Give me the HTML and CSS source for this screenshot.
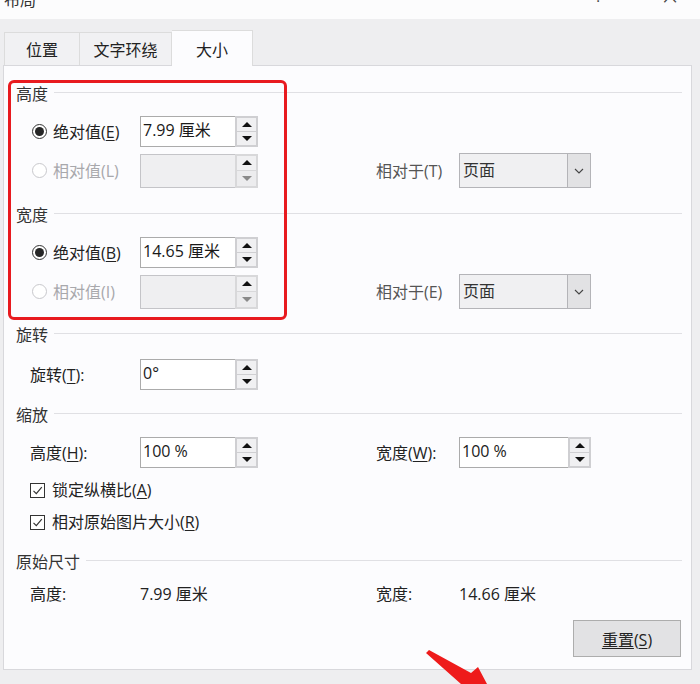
FILE: index.html
```html
<!DOCTYPE html>
<html lang="zh-CN">
<head>
<meta charset="utf-8">
<title>布局</title>
<link rel="stylesheet" href="styles.css">
</head>
<body>
<div class="titlebar">
  <span class="title">布局</span>
  <span class="tb-btns"><span class="help">?</span><span class="close">×</span></span>
</div>
<div class="tabs">
  <div class="tab t1">位置</div>
  <div class="tab t2">文字环绕</div>
  <div class="tab active">大小</div>
</div>
<div class="panel">
  <div class="redbox"></div>

  <div class="group-h"><span>高度</span></div>
  <div class="row">
    <label class="radio"><span class="rb on"></span>绝对值(<u>E</u>)</label>
    <div class="spin"><div class="field">7.99 厘米</div><div class="btns"><span class="b"><i class="up"></i></span><span class="b"><i class="dn"></i></span></div></div>
  </div>
  <div class="row">
    <label class="radio dis"><span class="rb"></span>相对值(L)</label>
    <div class="spin off"><div class="field"></div><div class="btns"><span class="b"><i class="up"></i></span><span class="b"><i class="dn"></i></span></div></div>
    <span></span>
    <span class="lbl2">相对于(T)</span>
    <div class="select"><span class="sv">页面</span><span class="arr"><svg width="10" height="6" viewBox="0 0 10 6"><path d="M1 1 L5 5 L9 1" fill="none" stroke="#444" stroke-width="1.1"/></svg></span></div>
  </div>

  <div class="group-h h2"><span>宽度</span></div>
  <div class="row">
    <label class="radio"><span class="rb on"></span>绝对值(<u>B</u>)</label>
    <div class="spin"><div class="field">14.65 厘米</div><div class="btns"><span class="b"><i class="up"></i></span><span class="b"><i class="dn"></i></span></div></div>
  </div>
  <div class="row">
    <label class="radio dis"><span class="rb"></span>相对值(I)</label>
    <div class="spin off"><div class="field"></div><div class="btns"><span class="b"><i class="up"></i></span><span class="b"><i class="dn"></i></span></div></div>
    <span></span>
    <span class="lbl2">相对于(E)</span>
    <div class="select"><span class="sv">页面</span><span class="arr"><svg width="10" height="6" viewBox="0 0 10 6"><path d="M1 1 L5 5 L9 1" fill="none" stroke="#444" stroke-width="1.1"/></svg></span></div>
  </div>

  <div class="group-h h3"><span>旋转</span></div>
  <div class="row r-rot">
    <span class="lbl">旋转(<u>T</u>):</span>
    <div class="spin"><div class="field">0°</div><div class="btns"><span class="b"><i class="up"></i></span><span class="b"><i class="dn"></i></span></div></div>
  </div>

  <div class="group-h h4"><span>缩放</span></div>
  <div class="row">
    <span class="lbl">高度(<u>H</u>):</span>
    <div class="spin"><div class="field">100 %</div><div class="btns"><span class="b"><i class="up"></i></span><span class="b"><i class="dn"></i></span></div></div>
    <span></span>
    <span class="lbl">宽度(<u>W</u>):</span>
    <div class="spin"><div class="field">100 %</div><div class="btns"><span class="b"><i class="up"></i></span><span class="b"><i class="dn"></i></span></div></div>
  </div>
  <div class="chk c1"><span class="box"><svg width="13" height="13" viewBox="0 0 13 13"><path d="M2.5 6.8 L5.3 9.6 L10.8 3.2" fill="none" stroke="#333" stroke-width="1.2"/></svg></span>锁定纵横比(<u>A</u>)</div>
  <div class="chk"><span class="box"><svg width="13" height="13" viewBox="0 0 13 13"><path d="M2.5 6.8 L5.3 9.6 L10.8 3.2" fill="none" stroke="#333" stroke-width="1.2"/></svg></span>相对原始图片大小(<u>R</u>)</div>

  <div class="group-h h5"><span>原始尺寸</span></div>
  <div class="row r-orig">
    <span class="lbl">高度:</span>
    <span class="val">7.99 厘米</span>
    <span></span>
    <span class="lbl">宽度:</span>
    <span class="val">14.66 厘米</span>
  </div>

  <div class="actions"><button class="btn"><span>重置</span>(<u>S</u>)</button></div>
</div>
<svg class="arrow" width="700" height="684" viewBox="0 0 700 684"><polygon points="426,653 429,650 471,673 478,667 487,684 461,684" fill="#ee1b1b"/></svg>
</body>
</html>
```
FILE: styles.css
```css
* { box-sizing: border-box; }
html, body { margin: 0; padding: 0; }
body {
  width: 700px;
  height: 684px;
  overflow: hidden;
  background: #eeeef0;
  font-family: "Open Sans", "Noto Sans CJK SC", sans-serif;
  font-size: 16px;
  color: #222;
  position: relative;
}
u { text-decoration: underline; text-underline-offset: 2px; text-decoration-thickness: 1px; }

.titlebar {
  height: 19px;
  background: #fcfcfd;
  overflow: hidden;
  display: flex;
  justify-content: space-between;
  padding-left: 4px;
}
.title { display: block; line-height: 16px; margin-top: -9px; color: #333; font-family: "Noto Sans CJK SC", sans-serif; }
.tb-btns { display: flex; }
.help { display: block; font-size: 15px; line-height: 16px; margin-top: -12px; margin-right: 58px; color: #444; }
.close { display: block; font-size: 24px; line-height: 20px; margin-top: -14px; margin-right: 20px; color: #444; font-family: "DejaVu Sans", sans-serif; font-weight: 300; }

.tabs {
  margin-top: 11px;
  height: 35px;
  padding-left: 4px;
  display: flex;
  align-items: flex-end;
}
.tab {
  height: 33px;
  display: flex;
  align-items: center;
  justify-content: center;
  background: #f1f1f3;
  border: 1px solid #dcdcdc;
  border-bottom: none;
  color: #222;
  font-family: "Noto Sans CJK SC", sans-serif;
  line-height: 20px;
}
.t1 { width: 76px; }
.t2 { width: 92px; border-left: none; }
.active {
  width: 81px;
  height: 36px;
  margin-bottom: -1px;
  background: #fcfcfe;
  border-left: none;
  position: relative;
  z-index: 1;
  padding-top: 1px;
}

.panel {
  margin-left: 3px;
  width: 689px;
  height: 605px;
  background: #fcfcfe;
  border: 1px solid #d8d8dc;
  position: relative;
  display: flex;
  flex-direction: column;
}
.redbox {
  position: absolute;
  left: 4px;
  top: 14px;
  width: 279px;
  height: 240px;
  border: 3px solid #e81a1f;
  border-radius: 6px;
  pointer-events: none;
}

.group-h {
  height: 24px;
  margin-top: 16px;
  padding-left: 12px;
  margin-right: 9px;
  display: flex;
  align-items: center;
  color: #333;
  line-height: 20px;
}
.group-h::after {
  content: "";
  flex: 1;
  height: 1px;
  background: #e0e0e4;
  margin-left: 6px;
  margin-top: -3px;
}
.h2 { margin-top: 13px; }
.h3 { margin-top: 12px; }
.h4 { margin-top: 9px; }
.h5 { margin-top: 12px; }

.row {
  height: 39px;
  margin-top: 6px;
  padding-left: 26px;
  display: grid;
  grid-template-columns: 110px 118px 118px 83px 132px;
  align-items: center;
  line-height: 20px;
}
.row + .row { margin-top: 0; }
.r-rot { margin-top: 8px; }
.r-orig { height: 28px; margin-top: 6px; }

.radio { display: flex; align-items: center; color: #222; }
.rb {
  width: 15px;
  height: 15px;
  margin-left: 2px;
  margin-right: 6px;
  border: 1px solid #333;
  border-radius: 50%;
  display: flex;
  align-items: center;
  justify-content: center;
  background: #fff;
}
.rb.on::after { content: ""; width: 9px; height: 9px; border-radius: 50%; background: #262626; }
.radio.dis { color: #a8a8ac; }
.radio.dis .rb { border-color: #c8c8cc; }

.lbl { color: #222; }
.lbl2 { color: #555; }
.val { color: #222; }

.spin {
  height: 31px;
  display: flex;
}
.field {
  flex: 1;
  border: 1px solid #ababab;
  border-right: none;
  background: #fff;
  padding-left: 2px;
  line-height: 26px;
  color: #1a1a1a;
}
.btns {
  width: 23px;
  display: flex;
  flex-direction: column;
  background: #cfcfd2;
  padding: 2px;
  gap: 1px;
}
.b {
  flex: 1;
  background: #f0f0f2;
  display: flex;
  align-items: center;
  justify-content: center;
}
.up { width: 0; height: 0; border-left: 5px solid transparent; border-right: 5px solid transparent; border-bottom: 5px solid #111; }
.dn { width: 0; height: 0; border-left: 5px solid transparent; border-right: 5px solid transparent; border-top: 5px solid #111; }
.spin.off { height: 34px; }
.spin.off .field { background: #efeff1; border-color: #c4c4c8; }
.spin.off .btns { background: #d8d8da; }
.spin.off .b + .b { background: #ececee; }
.spin.off .dn { border-top-color: #8a8a8a; }

.select {
  height: 35px;
  display: flex;
  background: #f0f0f2;
  border: 1px solid #b4b4b8;
}
.sv { flex: 1; padding-left: 3px; display: flex; align-items: center; padding-bottom: 2px; color: #333; }
.arr {
  width: 23px;
  background: #e2e2e4;
  border-left: 1px solid #b4b4b8;
  display: flex;
  align-items: center;
  justify-content: center;
}

.chk {
  height: 32px;
  padding-left: 26px;
  display: flex;
  align-items: center;
  line-height: 20px;
}
.c1 { margin-top: 2px; }
.box {
  width: 15px;
  height: 15px;
  border: 1px solid #333;
  background: #fff;
  margin-right: 7px;
  display: flex;
  align-items: center;
  justify-content: center;
}

.actions {
  margin-top: 12px;
  display: flex;
  justify-content: flex-end;
  padding-right: 10px;
}
.btn {
  width: 108px;
  height: 37px;
  background: #e2e2e4;
  border: 1px solid #adadad;
  font-family: "Open Sans", "Noto Sans CJK SC", sans-serif;
  font-size: 16px;
  color: #222;
  padding: 0;
}
.btn span { text-decoration: underline; text-decoration-thickness: 1px; text-underline-offset: 2px; }

.arrow {
  position: absolute;
  left: 0;
  top: 0;
  pointer-events: none;
}
```
